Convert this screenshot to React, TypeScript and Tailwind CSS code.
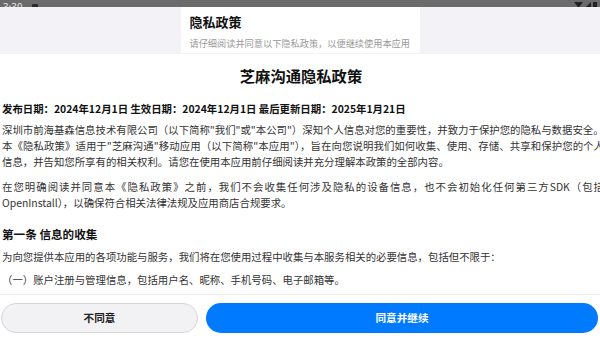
export default function App() {
  const font = { fontFamily: '"Noto Sans CJK SC", "Noto Sans", sans-serif' };
  return (
    <div className="w-[600px] h-[339px] overflow-hidden bg-white flex flex-col" style={font}>
      {/* status bar */}
      <div className="h-[7px] bg-[#6b6b6b] flex items-end justify-between px-[3px] overflow-hidden shrink-0">
        <div className="flex items-end gap-[10px] mb-[-5px]">
          <span className="text-[10px] leading-[10px] text-[#e5e5e5]">3:30</span>
          <span className="w-[6px] h-[8px] bg-[#2a2a2a] rounded-[1px]" />
        </div>
        <div className="flex items-end gap-[2px] mb-[-1px]">
          <svg width="9" height="6" viewBox="0 0 9 6"><path d="M0 0 L9 0 L4.5 6 Z" fill="#222" /></svg>
          <svg width="6" height="6" viewBox="0 0 6 6"><path d="M6 0 L6 6 L0 6 Z" fill="#222" /></svg>
          <span className="w-[4px] h-[6px] bg-[#222]" />
        </div>
      </div>

      {/* header */}
      <div className="h-[47px] bg-[#f2f2f7] flex justify-center shrink-0">
        <div className="w-[239px] h-[46px] bg-white pl-[9px] pt-[5px]">
          <div className="text-[13px] leading-[20px] font-bold text-[#111]">隐私政策</div>
          <div className="text-[9.2px] leading-[14px] mt-[4px] text-[#9a9a9a]">请仔细阅读并同意以下隐私政策，以便继续使用本应用</div>
        </div>
      </div>

      {/* content */}
      <div className="h-[240px] overflow-hidden shrink-0">
        <div className="w-[604px] pl-[2px] text-[#333] text-justify">
          <h1 className="text-[15.3px] leading-[20px] font-bold text-center text-[#111] mt-[11px] pr-[4px]">芝麻沟通隐私政策</h1>
          <div className="text-[10.4px] leading-[16px] font-bold text-[#111] mt-[16px]">
            发布日期：2024年12月1日 生效日期：2024年12月1日 最后更新日期：2025年1月21日
          </div>
          <div className="text-[10.4px] leading-[16px] mt-[5px]">
            <p>深圳市前海基森信息技术有限公司（以下简称"我们"或"本公司"）深知个人信息对您的重要性，并致力于保护您的隐私与数据安全。</p>
            <p>本《隐私政策》适用于"芝麻沟通"移动应用（以下简称"本应用"），旨在向您说明我们如何收集、使用、存储、共享和保护您的个人信息，并告知您所享有的相关权利。请您在使用本应用前仔细阅读并充分理解本政策的全部内容。</p>
          </div>
          <p className="text-[10.4px] leading-[16px] mt-[9px]">
            在您明确阅读并同意本《隐私政策》之前，我们不会收集任何涉及隐私的设备信息，也不会初始化任何第三方SDK（包括OpenInstall），以确保符合相关法律法规及应用商店合规要求。
          </p>
          <h2 className="text-[11.6px] leading-[18px] font-bold text-[#111] mt-[14px]">第一条 信息的收集</h2>
          <p className="text-[10.4px] leading-[16px] mt-[6px]">
            为向您提供本应用的各项功能与服务，我们将在您使用过程中收集与本服务相关的必要信息，包括但不限于：
          </p>
          <p className="text-[10.4px] leading-[16px] mt-[7px]">
            （一）账户注册与管理信息，包括用户名、昵称、手机号码、电子邮箱等。
          </p>
        </div>
      </div>

      {/* footer */}
      <div className="border-t border-[#ececec] flex-1 flex items-start pt-[8px] pl-[1px] pr-[2px] gap-[8px]">
        <button className="w-[197px] h-[30px] rounded-full bg-[#f2f2f4] border border-[#d6d6d6] text-[10.6px] font-bold text-[#222] flex items-center justify-center">
          不同意
        </button>
        <button className="flex-1 h-[30px] rounded-full bg-[#007aff] text-[10.6px] font-bold text-white flex items-center justify-center">
          同意并继续
        </button>
      </div>
    </div>
  );
}
